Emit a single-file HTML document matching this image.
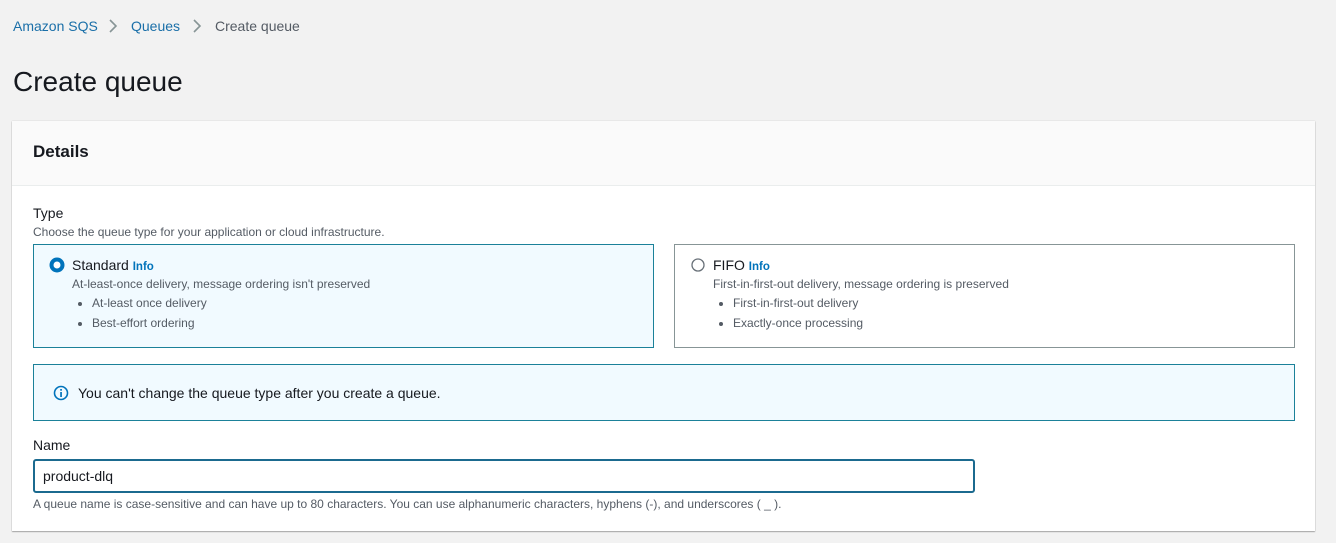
<!DOCTYPE html><html><head><style>
body{margin:0;width:1336px;height:543px;background:#f2f2f2;font-family:"Liberation Sans",sans-serif;color:#16191f;position:relative;overflow:hidden}
.a{position:absolute;white-space:nowrap}
.bc{font-size:14px;top:18px}
.link{color:#1a6fa8}
.card{position:absolute;left:12px;top:121px;width:1303px;height:410px;background:#fff;box-shadow:0 1px 1px rgba(0,0,0,.3),0 0 1px rgba(0,0,0,.2)}
.hdr{position:absolute;left:0;top:0;width:100%;height:64px;background:#fafafa;border-bottom:1px solid #eaeded}
.box{position:absolute;top:123px;height:104px;width:621px;border:1px solid #aab7b8;box-sizing:border-box}
.sel{background:#f1faff;border-color:#1b8199}
.t{font-size:14px}
.s{font-size:12px;color:#545b64}
.info{color:#0073bb;font-weight:bold;font-size:11.5px}
.dot{position:absolute;width:4px;height:4px;border-radius:50%;background:#545b64}
</style></head><body>
<div class="a bc link" style="left:13px">Amazon SQS</div>
<svg class="a" style="left:107px;top:18px" width="12" height="16"><path d="M3 2l6 6-6 6" stroke="#879596" stroke-width="1.6" fill="none"/></svg>
<div class="a bc link" style="left:131px">Queues</div>
<svg class="a" style="left:191px;top:18px" width="12" height="16"><path d="M3 2l6 6-6 6" stroke="#879596" stroke-width="1.6" fill="none"/></svg>
<div class="a bc" style="left:215px;color:#545b64">Create queue</div>
<div class="a" style="left:13px;top:66px;font-size:28px">Create queue</div>
<div class="card">
<div class="hdr"><div class="a" style="left:21px;top:21px;font-size:17px;font-weight:bold">Details</div></div>
<div class="a t" style="left:21px;top:84px">Type</div>
<div class="a s" style="left:21px;top:104px;font-size:12px">Choose the queue type for your application or cloud infrastructure.</div>
<div class="box sel" style="left:21px">
<svg class="a" style="left:15px;top:12px" width="16" height="16"><circle cx="8" cy="8" r="5.5" fill="#fff" stroke="#0073bb" stroke-width="4"/></svg>
<div class="a t" style="left:38px;top:12px">Standard <span class="info">Info</span></div>
<div class="a s" style="left:38px;top:32px">At-least-once delivery, message ordering isn't preserved</div>
<div class="dot" style="left:44px;top:57px"></div><div class="a s" style="left:58px;top:51px">At-least once delivery</div>
<div class="dot" style="left:44px;top:77px"></div><div class="a s" style="left:58px;top:71px">Best-effort ordering</div>
</div>
<div class="box" style="left:662px;border-color:#879596">
<svg class="a" style="left:15px;top:12px" width="16" height="16"><circle cx="8" cy="8" r="6" fill="#fff" stroke="#687078" stroke-width="1.3"/></svg>
<div class="a t" style="left:38px;top:12px">FIFO <span class="info">Info</span></div>
<div class="a s" style="left:38px;top:32px">First-in-first-out delivery, message ordering is preserved</div>
<div class="dot" style="left:44px;top:57px"></div><div class="a s" style="left:58px;top:51px">First-in-first-out delivery</div>
<div class="dot" style="left:44px;top:77px"></div><div class="a s" style="left:58px;top:71px">Exactly-once processing</div>
</div>
<div class="a" style="left:21px;top:243px;width:1262px;height:57px;background:#f1faff;border:1px solid #1b8199;box-sizing:border-box">
<svg class="a" style="left:19px;top:20px" width="16" height="16"><circle cx="8" cy="8" r="6.5" fill="none" stroke="#0073bb" stroke-width="1.6"/><rect x="7.2" y="7" width="1.7" height="5" fill="#0073bb"/><rect x="7.2" y="4" width="1.7" height="1.7" fill="#0073bb"/></svg>
<div class="a" style="left:44px;top:20px;font-size:14px">You can't change the queue type after you create a queue.</div>
</div>
<div class="a t" style="left:21px;top:316px">Name</div>
<div class="a" style="left:21px;top:338px;width:942px;height:34px;border:2px solid #1b6a8f;border-radius:3px;box-sizing:border-box">
<div class="a t" style="left:8px;top:7px">product-dlq</div></div>
<div class="a s" style="left:21px;top:376px;font-size:12px">A queue name is case-sensitive and can have up to 80 characters. You can use alphanumeric characters, hyphens (-), and underscores ( _ ).</div>
</div>
</body></html>
